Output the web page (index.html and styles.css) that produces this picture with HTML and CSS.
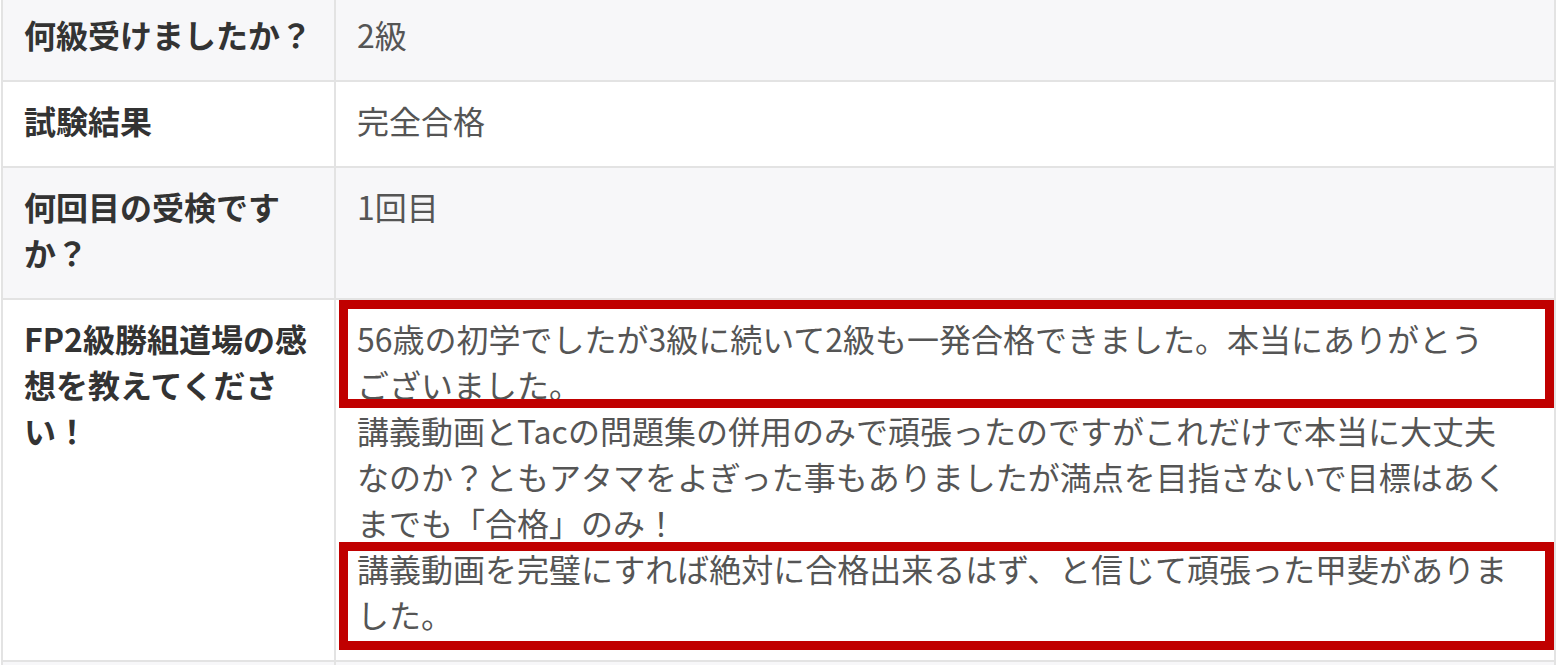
FILE: index.html
```html
<!DOCTYPE html>
<html lang="ja">
<head>
  <meta charset="UTF-8">
  <title>受験者の声</title>
  <meta name="viewport" content="width=device-width, initial-scale=1">
  <link rel="stylesheet" href="styles.css">
</head>
<body>

<table class="answers">
  <colgroup>
    <col class="col-q">
    <col>
  </colgroup>
  <tr>
    <th>何級受けましたか？</th>
    <td>2級</td>
  </tr>
  <tr>
    <th>試験結果</th>
    <td>完全合格</td>
  </tr>
  <tr>
    <th>何回目の受検ですか？</th>
    <td>1回目</td>
  </tr>
  <tr>
    <th>FP2級勝組道場の感想を教えてください！</th>
    <td class="voice">
      <p class="mark mark-top">56歳の初学でしたが3級に続いて2級も一発合格できました。本当にありがとうございました。</p>
      <p>講義動画とTacの問題集の併用のみで頑張ったのですがこれだけで本当に大丈夫なのか？ともアタマをよぎった事もありましたが満点を目指さないで目標はあくまでも「合格」のみ！</p>
      <p class="mark mark-bottom">講義動画を完璧にすれば絶対に合格出来るはず、と信じて頑張った甲斐がありました。</p>
    </td>
  </tr>
  <!-- 次の行（画面外） -->
  <tr>
    <th>&nbsp;</th>
    <td>&nbsp;</td>
  </tr>
</table>

</body>
</html>
```

FILE: styles.css
```css
html, body {
  margin: 0;
  overflow: hidden;
  background: #fff;
}
body {
  font-family: "Noto Sans CJK JP", "Noto Sans", sans-serif;
}
.answers {
  border-collapse: collapse;
  table-layout: fixed;
  width: 1555px;
  margin: -6px 0 0 1px;
}
.col-q {
  width: 333px;
}
.answers th,
.answers td {
  border: 2px solid #e3e3e3;
  padding: 15px 20px 23px 21px;
  font-size: 32px;
  line-height: 46px;
  vertical-align: top;
  text-align: left;
}
.answers th {
  font-weight: bold;
  color: #333;
}
.answers td {
  color: #555;
  padding-right: 44px;
}
.answers tr:nth-child(odd) {
  background: #f7f7f9;
}
.voice p {
  margin: 0;
}
.mark {
  position: relative;
}
.mark::before {
  content: "";
  position: absolute;
  left: -18px;
  right: -44px;
  border: 9px solid #c00000;
}
.mark-top::before {
  top: -15px;
  bottom: -1px;
}
.mark-bottom::before {
  top: -3px;
  bottom: -13px;
}
```
